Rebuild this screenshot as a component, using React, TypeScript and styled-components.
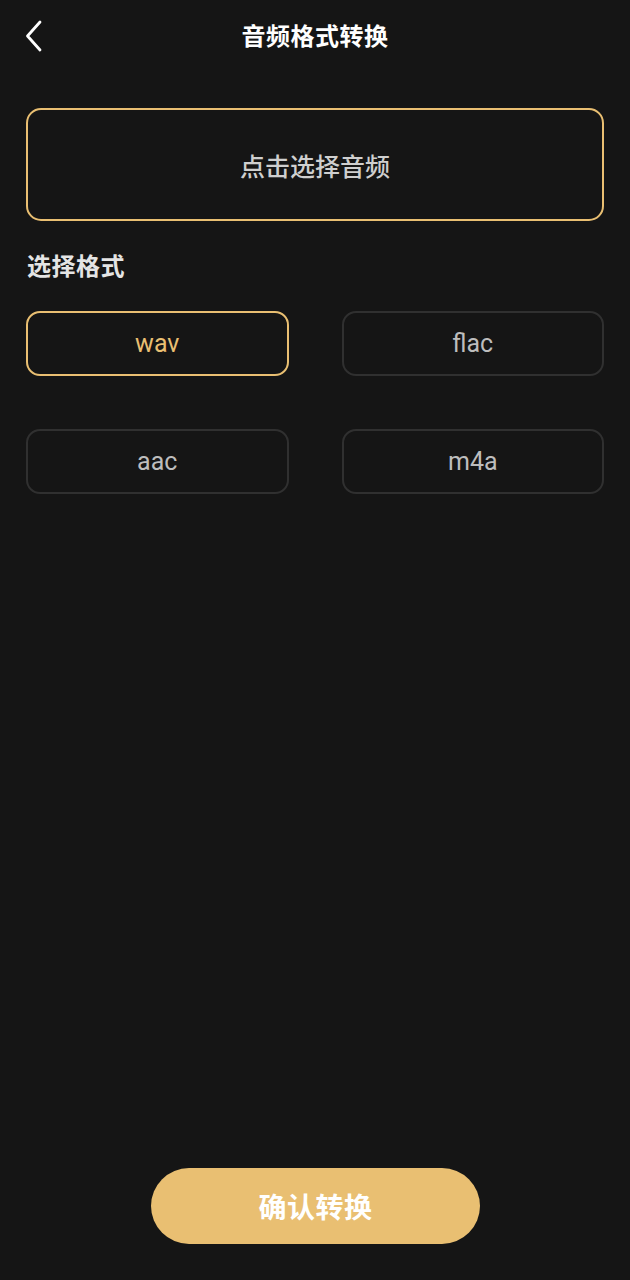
import React, { useState } from "react";
import styled, { createGlobalStyle } from "styled-components";

const GOLD = "#e9bf72";

const Global = createGlobalStyle`
  html, body { margin: 0; padding: 0; background: #151515; }
  * { box-sizing: border-box; }
  body { font-family: Roboto, "Noto Sans CJK SC", sans-serif; }
`;

const Page = styled.div`
  width: 630px;
  height: 1280px;
  background: #151515;
  display: flex;
  flex-direction: column;
`;

const Header = styled.header`
  position: relative;
  height: 74px;
  display: flex;
  align-items: center;
  justify-content: center;
  padding-bottom: 6px;
`;

const BackButton = styled.button`
  position: absolute;
  left: 22px;
  top: 17px;
  width: 36px;
  height: 38px;
  padding: 0;
  border: none;
  background: transparent;
  display: flex;
  align-items: center;
  justify-content: flex-start;
  cursor: pointer;
`;

const Title = styled.h1`
  margin: 0;
  font-family: "Noto Sans CJK SC", sans-serif;
  font-size: 24px;
  font-weight: 700;
  color: #ffffff;
  letter-spacing: 0.5px;
`;

const Content = styled.main`
  flex: 1;
  display: flex;
  flex-direction: column;
  padding: 34px 26px 36px;
`;

const UploadBox = styled.button`
  width: 100%;
  height: 113px;
  border: 2px solid ${GOLD};
  border-radius: 15px;
  background: transparent;
  display: flex;
  align-items: center;
  justify-content: center;
  font-family: "Noto Sans CJK SC", sans-serif;
  font-size: 25px;
  font-weight: 500;
  color: #cfcfcf;
  cursor: pointer;
`;

const SectionLabel = styled.h2`
  margin: 26px 0 0 1px;
  font-family: "Noto Sans CJK SC", sans-serif;
  font-size: 24px;
  font-weight: 700;
  line-height: 36px;
  color: #e4e4e4;
  letter-spacing: 0.5px;
`;

const FormatGrid = styled.div`
  margin-top: 28px;
  display: grid;
  grid-template-columns: 1fr 1fr;
  column-gap: 53px;
  row-gap: 53px;
`;

const FormatButton = styled.button<{ $active: boolean }>`
  height: 65px;
  border-radius: 14px;
  border: 2px solid ${(p) => (p.$active ? GOLD : "#303030")};
  background: transparent;
  color: ${(p) => (p.$active ? GOLD : "#bdbdbd")};
  font-family: Roboto, sans-serif;
  font-size: 25px;
  font-weight: 400;
  display: flex;
  align-items: center;
  justify-content: center;
  cursor: pointer;
`;

const Spacer = styled.div`
  flex: 1;
`;

const ConfirmButton = styled.button`
  align-self: center;
  width: 329px;
  height: 76px;
  border: none;
  border-radius: 38px;
  background: ${GOLD};
  color: #ffffff;
  font-family: "Noto Sans CJK SC", sans-serif;
  font-size: 28px;
  font-weight: 700;
  letter-spacing: 0.5px;
  cursor: pointer;
  margin-left: 1px;
`;

const formats = ["wav", "flac", "aac", "m4a"];

export default function App() {
  const [selected, setSelected] = useState("wav");
  return (
    <Page>
      <Global />
      <Header>
        <BackButton aria-label="back">
          <svg width="24" height="34" viewBox="0 0 24 34" fill="none">
            <path
              d="M18 3 L5.5 17 L18 31"
              stroke="#ffffff"
              strokeWidth="2.8"
              strokeLinecap="round"
              strokeLinejoin="round"
            />
          </svg>
        </BackButton>
        <Title>音频格式转换</Title>
      </Header>
      <Content>
        <UploadBox>点击选择音频</UploadBox>
        <SectionLabel>选择格式</SectionLabel>
        <FormatGrid>
          {formats.map((f) => (
            <FormatButton key={f} $active={selected === f} onClick={() => setSelected(f)}>
              {f}
            </FormatButton>
          ))}
        </FormatGrid>
        <Spacer />
        <ConfirmButton>确认转换</ConfirmButton>
      </Content>
    </Page>
  );
}
